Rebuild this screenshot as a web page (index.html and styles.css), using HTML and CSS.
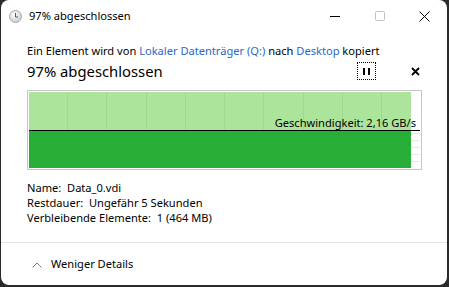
FILE: index.html
```html
<!DOCTYPE html>
<html lang="de">
<head>
  <meta charset="UTF-8" />
  <title>97% abgeschlossen</title>
  <link rel="stylesheet" href="styles.css">
</head>
<body>
  <div class="window">
    <div class="titlebar">
      <svg class="app-icon" width="13" height="13" viewBox="0 0 13 13">
        <defs>
          <radialGradient id="face" cx="40%" cy="35%" r="70%">
            <stop offset="0" stop-color="#ffffff"/>
            <stop offset="1" stop-color="#c9c9c9"/>
          </radialGradient>
        </defs>
        <circle cx="6.5" cy="6.5" r="6" fill="url(#face)" stroke="#a8a8a8" stroke-width="1"/>
        <path d="M6.5 3 V7 H9" fill="none" stroke="#555" stroke-width="1"/>
      </svg>
      <span class="title">97% abgeschlossen</span>
      <div class="controls">
        <span class="ctl"><svg width="10" height="10" viewBox="0 0 10 10"><path d="M0 5.5 H10" stroke="#000" stroke-width="1"/></svg></span>
        <span class="ctl"><svg width="10" height="10" viewBox="0 0 10 10"><rect x="0.5" y="0.5" width="9" height="9" rx="1" fill="none" stroke="#c4c4c4"/></svg></span>
        <span class="ctl"><svg width="11" height="11" viewBox="0 0 11 11"><path d="M0.5 0.5 L10.5 10.5 M10.5 0.5 L0.5 10.5" stroke="#000" stroke-width="1"/></svg></span>
      </div>
    </div>

    <div class="content">
      <div class="info">Ein Element wird von <span class="link">Lokaler Datenträger (Q:)</span> nach <span class="link">Desktop</span> kopiert</div>

      <div class="status">
        <span class="status-text">97% abgeschlossen</span>
        <span class="pause">
          <svg width="9" height="9" viewBox="0 0 9 9"><rect x="1" y="1" width="2" height="7" fill="#000"/><rect x="6" y="1" width="2" height="7" fill="#000"/></svg>
        </span>
        <span class="cancel">
          <svg width="9" height="9" viewBox="0 0 9 9"><path d="M1 1 L8 8 M8 1 L1 8" stroke="#000" stroke-width="1.8"/></svg>
        </span>
      </div>

      <div class="graph">
        <div class="plot">
          <div class="row upper">
            <div class="fill light"></div>
            <div class="rest"></div>
          </div>
          <div class="rate-line"></div>
          <div class="row lower">
            <div class="fill dark"></div>
            <div class="rest lines"></div>
          </div>
          <span class="speed">Geschwindigkeit: 2,16 GB/s</span>
        </div>
      </div>

      <div class="details">
        <div>Name:&nbsp; Data_0.vdi</div>
        <div>Restdauer:&nbsp; Ungefähr 5 Sekunden</div>
        <div>Verbleibende Elemente:&nbsp; 1 (464 MB)</div>
      </div>
    </div>

    <div class="footer">
      <svg class="chevron" width="10" height="6" viewBox="0 0 10 6"><path d="M0.5 5.5 L5 1 L9.5 5.5" fill="none" stroke="#7a7a7a" stroke-width="1"/></svg>
      <span>Weniger Details</span>
    </div>
  </div>
</body>
</html>
```

FILE: styles.css
```css
body { margin: 0; background: #2a2a2a; font-family: "Noto Sans", sans-serif; color: #000; }

.window {
  margin-left: 1px;
  width: 446px; height: 285px;
  background: #fff;
  border-radius: 8px;
  overflow: hidden;
  display: flex; flex-direction: column;
}

.titlebar { height: 32px; display: flex; align-items: center; font-size: 11.1px; }
.app-icon { margin-left: 8px; margin-right: 7px; }
.title { line-height: 16px; }
.controls { margin-left: auto; display: flex; }
.ctl { width: 45px; height: 32px; display: flex; align-items: center; justify-content: center; }

.content { padding: 11px 25px 0 26px; font-size: 11.1px; }
.info { line-height: 16px; white-space: nowrap; }
.link { color: #2a67c9; }

.status { margin-top: 2px; height: 20px; display: flex; align-items: center; }
.status-text { font-size: 14.8px; line-height: 20px; flex: 1; }
.pause {
  width: 17px; height: 16px;
  border: 1px dotted #000;
  display: flex; align-items: center; justify-content: center;
}
.cancel { margin-left: 32px; width: 14px; display: flex; justify-content: center; }

.graph { margin-top: 9px; border: 1px solid #c6c6c6; padding: 1px; }
.plot { position: relative; height: 76px; display: flex; flex-direction: column; }
.row { display: flex; }
.upper { height: 38px; }
.lower { height: 37px; }
.fill { width: 382px; }
.rest { flex: 1; }
.light {
  background: #ade49b repeating-linear-gradient(90deg, transparent 0, transparent 38px, #9bdb89 38px, #9bdb89 39px, transparent 39px, transparent 39.3px);
}
.dark { background: #27ae36; }
.lines { background: repeating-linear-gradient(180deg, #fff 0, #fff 2px, #dcf2d4 2px, #dcf2d4 3px, #fff 3px, #fff 7px); }
.rate-line { height: 1px; background: #000; }
.speed {
  position: absolute; right: 4px; top: 23px;
  line-height: 15px; white-space: nowrap;
}

.details { margin-top: 10px; line-height: 15px; }

.footer {
  margin-top: 17px;
  border-top: 1px solid #e5e5e5;
  padding: 13px 0 0 31px;
  display: flex; align-items: center;
  font-size: 11.1px; line-height: 16px;
}
.chevron { margin-right: 9px; margin-top: 2px; }
```
